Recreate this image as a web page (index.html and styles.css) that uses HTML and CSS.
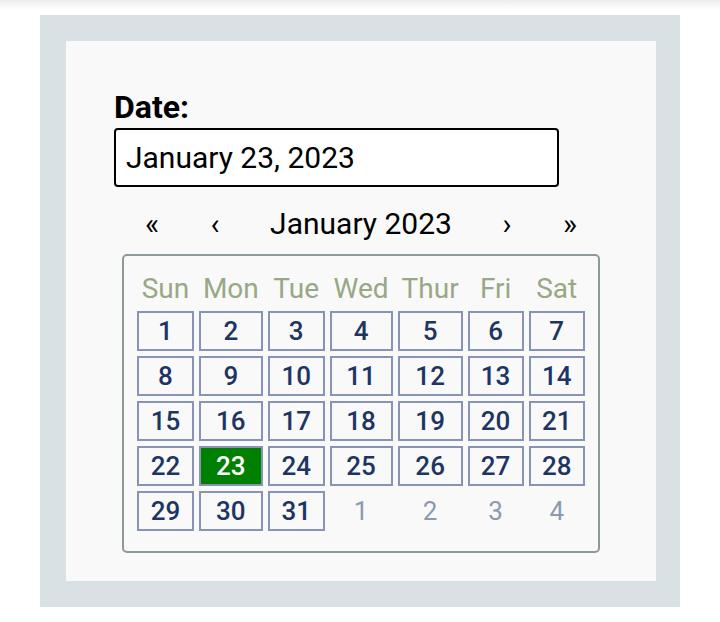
FILE: index.html
```html
<!DOCTYPE html>
<html>
<head>
<meta charset="utf-8">
<link rel="stylesheet" href="styles.css">
</head>
<body>
<div class="frame">
  <div class="panel">
    <label class="label" for="date">Date:</label>
    <div class="input" id="date">January 23, 2023</div>
    <div class="picker">
      <div class="nav">
        <span class="nav-btn">&laquo;</span>
        <span class="nav-btn">&lsaquo;</span>
        <span class="nav-title">January 2023</span>
        <span class="nav-btn">&rsaquo;</span>
        <span class="nav-btn">&raquo;</span>
      </div>
      <div class="cal">
        <table class="grid">
          <thead>
            <tr><th>Sun</th><th>Mon</th><th>Tue</th><th>Wed</th><th>Thur</th><th>Fri</th><th>Sat</th></tr>
          </thead>
          <tbody>
            <tr><td>1</td><td>2</td><td>3</td><td>4</td><td>5</td><td>6</td><td>7</td></tr>
            <tr><td>8</td><td>9</td><td>10</td><td>11</td><td>12</td><td>13</td><td>14</td></tr>
            <tr><td>15</td><td>16</td><td>17</td><td>18</td><td>19</td><td>20</td><td>21</td></tr>
            <tr><td>22</td><td class="selected">23</td><td>24</td><td>25</td><td>26</td><td>27</td><td>28</td></tr>
            <tr><td>29</td><td>30</td><td>31</td><td class="other">1</td><td class="other">2</td><td class="other">3</td><td class="other">4</td></tr>
          </tbody>
        </table>
      </div>
    </div>
  </div>
</div>
</body>
</html>
```
FILE: styles.css
```css
html, body {
  margin: 0;
  padding: 0;
}
body {
  background: linear-gradient(#ececec 0px, #ffffff 10px, #ffffff 100%);
  font-family: Roboto, "Liberation Sans", sans-serif;
  padding: 15px 40px 15px 40px;
  height: 622px;
  box-sizing: border-box;
}
.frame {
  background: #dae1e4;
  padding: 26px 24px 26px 26px;
}
.panel {
  background: #f9f9f9;
  padding: 47px 48px 29px 48px;
  height: 540px;
  box-sizing: border-box;
}
.label {
  display: block;
  font-size: 32px;
  font-weight: 700;
  color: #000;
  margin-bottom: 2px;
}
.input {
  width: 445px;
  height: 59px;
  box-sizing: border-box;
  border: 2px solid #000;
  border-radius: 4px;
  background: #fff;
  font-size: 30px;
  padding: 0 10px;
  display: flex;
  align-items: center;
  color: #000;
}
.picker {
  margin-left: 8px;
  width: 478px;
}
.nav {
  display: grid;
  grid-template-columns: 60px 66px 1fr 66px 60px;
  align-items: center;
  text-align: center;
  font-size: 30px;
  color: #000;
  margin-top: 19px;
  margin-bottom: 13px;
}
.nav-btn {
  cursor: pointer;
}
.cal {
  border: 2px solid #8f989c;
  border-radius: 5px;
  padding: 10px 8px 15px 8px;
}
.grid {
  border-collapse: separate;
  border-spacing: 5px;
  margin: 0;
}
.grid th {
  font-size: 28px;
  font-weight: 400;
  color: #98a884;
  padding: 0 4px;
  line-height: 35px;
  text-align: center;
}
.grid td {
  font-size: 26px;
  font-weight: 500;
  color: #1e3563;
  border: 2px solid #8794b4;
  width: 53px;
  height: 36px;
  padding: 0;
  text-align: center;
  vertical-align: middle;
  line-height: 36px;
}
.grid td.selected {
  background: #008000;
  color: #ffffff;
}
.grid td.other {
  border-color: transparent;
  color: #8a99ae;
  font-weight: 400;
}
```
